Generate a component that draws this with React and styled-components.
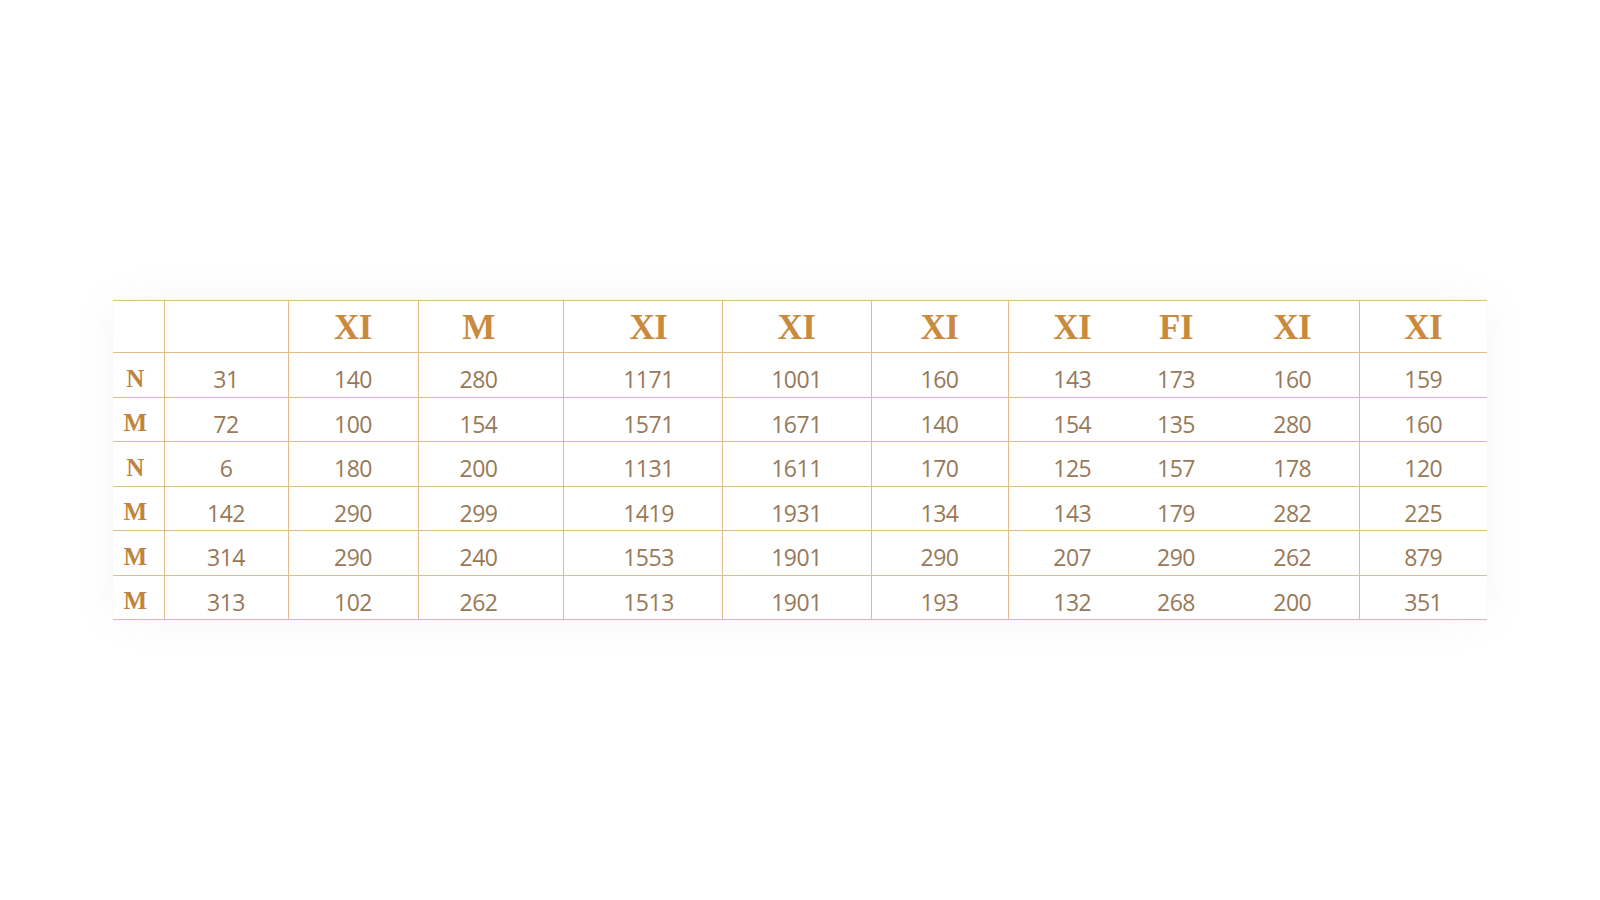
import React from 'react';
import styled, { createGlobalStyle } from 'styled-components';

// DATA //

const widths = [51, 124, 130, 145, 159, 149, 137, 128, 80, 143, 128];
// columns that have no divider on their right side
const openRight = [7, 8, 10];
// some columns sit a little off their cell centre (px, minus = left)
const offsets = { 3: -12, 4: 6, 9: 5 };

const headers = ['', '', 'XI', 'M', 'XI', 'XI', 'XI', 'XI', 'FI', 'XI', 'XI'];

const rows = [
  ['N', '31', '140', '280', '1171', '1001', '160', '143', '173', '160', '159'],
  ['M', '72', '100', '154', '1571', '1671', '140', '154', '135', '280', '160'],
  ['N', '6', '180', '200', '1131', '1611', '170', '125', '157', '178', '120'],
  ['M', '142', '290', '299', '1419', '1931', '134', '143', '179', '282', '225'],
  ['M', '314', '290', '240', '1553', '1901', '290', '207', '290', '262', '879'],
  ['M', '313', '102', '262', '1513', '1901', '193', '132', '268', '200', '351'],
];

// COMPONENT //

export default function App() {
  return (
    <Page>
      <GlobalStyle />
      <Card>
        <Table>
          <colgroup>
            {widths.map((w, i) => (
              <col key={i} style={{ width: w }} />
            ))}
          </colgroup>
          <thead>
            <tr>
              {headers.map((h, i) => (
                <HeadCell key={i} $open={openRight.includes(i)} $offset={offsets[i] || 0}>
                  {h}
                </HeadCell>
              ))}
            </tr>
          </thead>
          <tbody>
            {rows.map((row, r) => (
              <tr key={r}>
                {row.map((v, i) =>
                  i === 0 ? (
                    <RowLabel key={i}>{v}</RowLabel>
                  ) : (
                    <Cell key={i} $open={openRight.includes(i)} $offset={offsets[i] || 0}>
                      {v}
                    </Cell>
                  )
                )}
              </tr>
            ))}
          </tbody>
        </Table>
      </Card>
    </Page>
  );
}

// STYLING //

const line = '1.5px solid #dfbd88';

const sidePad = p =>
  p.$offset < 0
    ? `padding-right: ${-p.$offset * 2}px;`
    : `padding-left: ${p.$offset * 2}px;`;

const GlobalStyle = createGlobalStyle`
  html, body {
    margin: 0;
    padding: 0;
    background: #ffffff;
  }
`;

const Page = styled.div`
  width: 1600px;
  height: 900px;
  display: flex;
  justify-content: center;
  padding-top: 300px;
  box-sizing: border-box;
  background: #ffffff;
`;

const Card = styled.div`
  height: fit-content;
  box-shadow: 0 0 40px rgba(120, 110, 100, 0.06);
`;

const Table = styled.table`
  width: 1374px;
  table-layout: fixed;
  border-collapse: collapse;
  border-top: ${line};
  border-bottom: ${line};
`;

const HeadCell = styled.th`
  height: 52px;
  padding: 3px 0 0 0;
  ${sidePad}
  box-sizing: border-box;
  text-align: center;
  vertical-align: middle;
  font-family: "Liberation Serif", "DejaVu Serif", serif;
  font-weight: 700;
  font-size: 35px;
  letter-spacing: -0.5px;
  color: #c98a3e;
  border-bottom: ${line};
  border-right: ${p => (p.$open ? 'none' : line)};
  &:last-child {
    border-right: none;
  }
`;

const RowLabel = styled.td`
  height: 44.5px;
  padding: 8px 6px 0 0;
  box-sizing: border-box;
  text-align: center;
  vertical-align: middle;
  font-family: "Liberation Serif", "DejaVu Serif", serif;
  font-weight: 700;
  font-size: 25px;
  color: #c0843e;
  border-bottom: ${line};
  border-right: ${line};
`;

const Cell = styled.td`
  height: 44.5px;
  padding: 9px 0 0 0;
  ${sidePad}
  box-sizing: border-box;
  text-align: center;
  vertical-align: middle;
  font-family: "Open Sans", "Noto Sans", sans-serif;
  font-weight: 400;
  font-size: 23px;
  letter-spacing: -0.5px;
  color: #977959;
  border-bottom: ${line};
  border-right: ${p => (p.$open ? 'none' : line)};
`;
